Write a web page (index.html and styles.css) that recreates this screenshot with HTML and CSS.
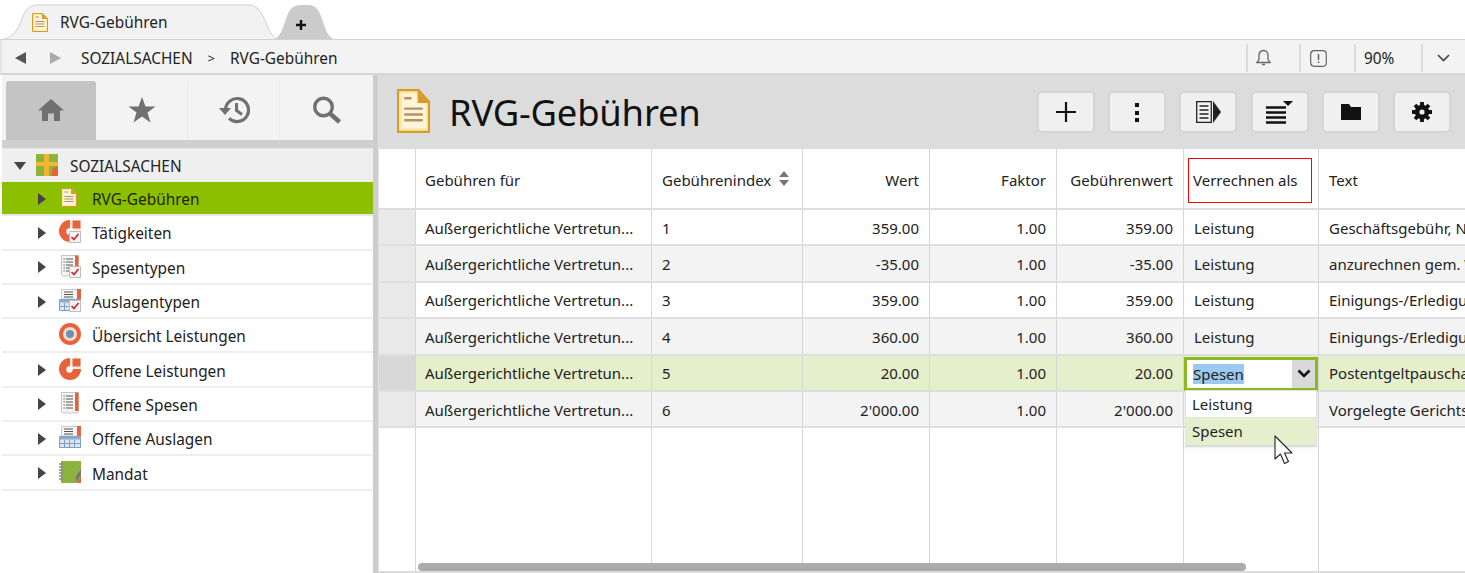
FILE: index.html
```html
<!DOCTYPE html>
<html lang="de">
<head>
<meta charset="utf-8">
<title>RVG-Gebühren</title>
<link rel="stylesheet" href="styles.css">
</head>
<body>
<svg class="defs" width="0" height="0">
  <defs>
    <symbol id="doc" viewBox="0 0 16 19">
      <path d="M.5.5H10.500L15.500 5.500V18.500H.5Z" fill="#fbe9a8" stroke="#d99a2b"/>
      <path d="M2.500 2H10L14 6V17H2.500Z" fill="#fdf6dc"/>
      <path d="M10 .5 15.500 6H10Z" fill="#d99a2b"/>
      <path d="M3.500 4H7M3.500 8.500H12.500M3.500 11H12.500M3.500 13.500H12.500" stroke="#b88f5f" fill="none"/>
    </symbol>
    <symbol id="pie" viewBox="0 0 22 22">
      <circle cx="11" cy="11" r="11" fill="#e8633a"/>
      <path d="M11 11V0H22V11Z" fill="#fbeee8"/>
      <path d="M13.500 8.500V.5H21.500V8.500Z" fill="#e8633a"/>
      <circle cx="10.500" cy="11.500" r="3.200" fill="#fff"/>
    </symbol>
    <symbol id="list" viewBox="0 0 18 22">
      <path d="M.5.5H17.500V20L15 21.500 12 20 9 21.500 6 20 3 21.500.5 20Z" fill="#f5f5f5" stroke="#c6c6c6"/>
      <path d="M14 .5H17.500V19H14Z" fill="#e8633a"/>
      <path d="M5 4H12M5 7H12M5 10H12M5 13H12M5 16H12M2.500 4H3.800M2.500 7H3.800M2.500 10H3.800M2.500 13H3.800M2.500 16H3.800" stroke="#555" fill="none"/>
    </symbol>
    <symbol id="cal" viewBox="0 0 22 22">
      <path d="M2.500.5H21V10H2.500Z" fill="#f5f5f5" stroke="#ccc"/>
      <path d="M18 0H22V10H18Z" fill="#e8633a"/>
      <path d="M5 3H14M5 5.500H14M5 8H14" stroke="#555" fill="none"/>
      <path d="M.5 10.500H21.500V21.500H.5Z" fill="#dbe6f1" stroke="#7f9fc0"/>
      <path d="M.5 10.500H21.500V13.500H.5Z" fill="#8aaacb"/>
      <path d="M5.500 14V21M10.500 14V21M15.500 14V21M1 17.500H21" stroke="#7f9fc0" fill="none"/>
    </symbol>
    <symbol id="check" viewBox="0 0 12 12">
      <path d="M.5.5H11.500V11.500H.5Z" fill="#f4f4f4" stroke="#bdbdbd"/>
      <path d="M2.500 6 5 8.500 9.500 3" stroke="#d5252b" stroke-width="1.700" fill="none"/>
    </symbol>
    <symbol id="tri" viewBox="0 0 8 12"><path d="M0 0 8 6 0 12Z" fill="#444"/></symbol>
  </defs>
</svg>

<header class="tabstrip">
  <div class="tab">
    <svg class="tab-shape" width="276" height="40" viewBox="0 0 276 40"><path d="M2 40C12 38 16 30 20 20 23 12 26 6 36 6H246C256 6 260 14 264 24 267 31 270 37 274 40" fill="#f2f2f2" stroke="#cfcfcf"/></svg>
    <svg class="tab-icon" width="16" height="19"><use href="#doc"/></svg>
    <span class="tab-label">RVG-Gebühren</span>
  </div>
  <div class="tab-new">
    <svg class="tab-shape" width="58" height="36" viewBox="0 0 58 36"><path d="M0 36C5 33 7 28 10 19 13 9 16 2 26 2H33C42 2 45 9 48 19 51 28 53 33 58 36Z" fill="#cbcbcb"/></svg>
    <svg class="tab-plus" width="10" height="10" viewBox="0 0 10 10"><path d="M5 0V10M0 5H10" stroke="#111" stroke-width="2.400"/></svg>
  </div>
</header>

<nav class="crumbbar">
  <svg class="nav-arrow" width="11" height="12" viewBox="0 0 11 12"><path d="M11 0V12L0 6Z" fill="#555"/></svg>
  <svg class="nav-arrow next" width="11" height="12" viewBox="0 0 11 12"><path d="M0 0V12L11 6Z" fill="#aaa"/></svg>
  <span class="crumb">SOZIALSACHEN</span>
  <span class="crumb-sep">&gt;</span>
  <span class="crumb">RVG-Gebühren</span>
  <div class="status">
    <div class="status-cell bell"><svg width="15" height="18" viewBox="0 0 15 18"><path d="M7.500 1.500C4 1.500 3 4 3 7V10.500L1 13.500H14L12 10.500V7C12 4 11 1.500 7.500 1.500ZM6 15.500H9" fill="none" stroke="#666" stroke-width="1.300"/></svg></div>
    <div class="status-cell alert"><svg width="17" height="17" viewBox="0 0 17 17"><rect x=".7" y=".7" width="15.600" height="15.600" rx="3.500" fill="none" stroke="#666" stroke-width="1.200"/><path d="M8.500 4V10M8.500 11.500V13" stroke="#666" stroke-width="1.500"/></svg></div>
    <div class="status-cell zoom">90%</div>
    <div class="status-cell more"><svg width="13" height="8" viewBox="0 0 13 8"><path d="M1 1 6.500 6.500 12 1" fill="none" stroke="#444" stroke-width="1.600"/></svg></div>
  </div>
</nav>

<main class="main">
  <aside class="sidebar">
    <div class="side-tabs">
      <div class="side-tab active"><svg width="28" height="24" viewBox="0 0 28 24"><path d="M14 1 1 12.500H5V23H11V15.500H17V23H23V12.500H27Z" fill="#707070"/></svg></div>
      <div class="side-tab"><svg width="28" height="26" viewBox="0 0 28 26"><path d="M14 0 17.500 9.500H27.500L19.500 15.500 22.500 25.500 14 19.500 5.500 25.500 8.500 15.500.5 9.500H10.500Z" fill="#707070"/></svg></div>
      <div class="side-tab"><svg width="32" height="28" viewBox="0 0 32 28"><path d="M7.500 14A11.500 11.500 0 1 1 11 22.300" fill="none" stroke="#707070" stroke-width="3.200"/><path d="M1 12H13L7 19Z" fill="#707070"/><path d="M18.500 7V14.500L24 18.500" fill="none" stroke="#707070" stroke-width="3"/></svg></div>
      <div class="side-tab"><svg width="30" height="28" viewBox="0 0 30 28"><circle cx="11.500" cy="11" r="8.800" fill="none" stroke="#707070" stroke-width="3.400"/><path d="M18 17.500 27.500 26" stroke="#707070" stroke-width="4.500"/></svg></div>
    </div>
    <div class="side-band"></div>
    <ul class="tree">
      <li class="tree-root">
        <svg class="caret-down" width="12" height="8" viewBox="0 0 12 8"><path d="M0 0H12L6 8Z" fill="#444"/></svg>
        <svg class="root-icon" width="22" height="22" viewBox="0 0 22 22"><rect width="22" height="22" fill="#8cb43c"/><path d="M8 0H13V8H22V12H13V22H8V12H0V8H8Z" fill="#f2b632"/><path d="M16 22V15L22 12V22Z" fill="#e8633a"/></svg>
        <span>SOZIALSACHEN</span>
      </li>
      <li class="tree-item selected"><svg class="tri" width="8" height="12"><use href="#tri"/></svg><svg class="item-icon doc-icon" width="16" height="19" viewBox="0 0 16 19"><use href="#doc"/></svg><span>RVG-Gebühren</span></li>
      <li class="tree-item"><svg class="tri" width="8" height="12"><use href="#tri"/></svg><span class="icon-box"><svg width="22" height="22"><use href="#pie"/></svg><svg class="badge" width="12" height="12"><use href="#check"/></svg></span><span>Tätigkeiten</span></li>
      <li class="tree-item"><svg class="tri" width="8" height="12"><use href="#tri"/></svg><span class="icon-box"><svg width="18" height="22" class="indent"><use href="#list"/></svg><svg class="badge" width="12" height="12"><use href="#check"/></svg></span><span>Spesentypen</span></li>
      <li class="tree-item"><svg class="tri" width="8" height="12"><use href="#tri"/></svg><span class="icon-box"><svg width="22" height="22"><use href="#cal"/></svg><svg class="badge" width="12" height="12"><use href="#check"/></svg></span><span>Auslagentypen</span></li>
      <li class="tree-item"><span class="tri-space"></span><svg class="item-icon" width="22" height="22" viewBox="0 0 22 22"><circle cx="11" cy="11" r="11" fill="#e8633a"/><circle cx="11" cy="11" r="7" fill="#f6ddd2"/><circle cx="11" cy="11" r="4" fill="#6f90b5"/></svg><span>Übersicht Leistungen</span></li>
      <li class="tree-item"><svg class="tri" width="8" height="12"><use href="#tri"/></svg><svg class="item-icon" width="22" height="22"><use href="#pie"/></svg><span>Offene Leistungen</span></li>
      <li class="tree-item"><svg class="tri" width="8" height="12"><use href="#tri"/></svg><span class="icon-box"><svg width="18" height="22" class="indent"><use href="#list"/></svg></span><span>Offene Spesen</span></li>
      <li class="tree-item"><svg class="tri" width="8" height="12"><use href="#tri"/></svg><svg class="item-icon" width="22" height="22"><use href="#cal"/></svg><span>Offene Auslagen</span></li>
      <li class="tree-item"><svg class="tri" width="8" height="12"><use href="#tri"/></svg><svg class="item-icon" width="22" height="22" viewBox="0 0 22 22"><rect x="2" width="20" height="22" fill="#8cb43c"/><path d="M22 8V14L17 21V15Z" fill="#777"/><path d="M18 22 22 15V22Z" fill="#e8633a"/><path d="M0 3H4M0 6H4M0 9H4M0 12H4M0 15H4M0 18H4" stroke="#888" stroke-width="1.500"/></svg><span>Mandat</span></li>
    </ul>
  </aside>

  <div class="splitter"></div>

  <section class="content">
    <div class="toolbar">
      <svg class="title-icon" width="33" height="44" viewBox="0 0 16 19" preserveAspectRatio="none"><use href="#doc"/></svg>
      <h1 class="title">RVG-Gebühren</h1>
      <div class="tools">
        <button class="tool"><svg width="20" height="20" viewBox="0 0 20 20"><path d="M10 0V20M0 10H20" stroke="#111" stroke-width="2.200"/></svg></button>
        <button class="tool"><svg width="4" height="20" viewBox="0 0 4 20"><path d="M0 1H4V5H0ZM0 9H4V13H0ZM0 16H4V20H0Z" fill="#111"/></svg></button>
        <button class="tool"><svg width="25" height="22" viewBox="0 0 25 22"><path d="M.7.7H15.300V21.300H.7Z" fill="#f2f2f2" stroke="#222" stroke-width="1.300"/><path d="M3.500 5H12.500M3.500 9H12.500M3.500 13H12.500M3.500 17H12.500" stroke="#222" stroke-width="1.300"/><path d="M17 0 25 11 17 22Z" fill="#222"/></svg></button>
        <button class="tool"><svg width="27" height="23" viewBox="0 0 27 23"><path d="M0 5H20M0 10H20M0 15H20M0 20H20" stroke="#111" stroke-width="2.400" transform="translate(0 1.500)"/><path d="M17 0H27L22 5Z" fill="#111"/></svg></button>
        <button class="tool"><svg width="20" height="16" viewBox="0 0 20 16"><path d="M0 0H8L10 3H20V16H0Z" fill="#111"/></svg></button>
        <button class="tool"><svg width="20" height="20" viewBox="0 0 20 20"><circle cx="10" cy="10" r="5" fill="none" stroke="#111" stroke-width="4.500"/><path d="M10 0V20M0 10H20M3 3 17 17M17 3 3 17" stroke="#111" stroke-width="3.800"/><circle cx="10" cy="10" r="2.600" fill="#eee"/></svg></button>
      </div>
    </div>

    <div class="grid">
      <div class="row head">
        <div class="cell gutter"></div>
        <div class="cell">Gebühren für</div>
        <div class="cell">Gebührenindex<svg class="sort" width="10" height="15" viewBox="0 0 10 15"><path d="M0 6 5 0 10 6ZM0 9H10L5 15Z" fill="#777"/></svg></div>
        <div class="cell num">Wert</div>
        <div class="cell num">Faktor</div>
        <div class="cell num">Gebührenwert</div>
        <div class="cell boxed"><span class="red-box">Verrechnen als</span></div>
        <div class="cell">Text</div>
      </div>
      <div class="row">
        <div class="cell gutter"></div><div class="cell">Außergerichtliche Vertretun...</div><div class="cell">1</div><div class="cell num">359.00</div><div class="cell num">1.00</div><div class="cell num">359.00</div><div class="cell">Leistung</div><div class="cell clip">Geschäftsgebühr, Nr. 2300 VV RVG</div>
      </div>
      <div class="row alt">
        <div class="cell gutter"></div><div class="cell">Außergerichtliche Vertretun...</div><div class="cell">2</div><div class="cell num">-35.00</div><div class="cell num">1.00</div><div class="cell num">-35.00</div><div class="cell">Leistung</div><div class="cell clip">anzurechnen gem. Vorbemerkung</div>
      </div>
      <div class="row">
        <div class="cell gutter"></div><div class="cell">Außergerichtliche Vertretun...</div><div class="cell">3</div><div class="cell num">359.00</div><div class="cell num">1.00</div><div class="cell num">359.00</div><div class="cell">Leistung</div><div class="cell clip">Einigungs-/Erledigungsgebühr</div>
      </div>
      <div class="row alt">
        <div class="cell gutter"></div><div class="cell">Außergerichtliche Vertretun...</div><div class="cell">4</div><div class="cell num">360.00</div><div class="cell num">1.00</div><div class="cell num">360.00</div><div class="cell">Leistung</div><div class="cell clip">Einigungs-/Erledigungsgebühr</div>
      </div>
      <div class="row current">
        <div class="cell gutter"></div><div class="cell">Außergerichtliche Vertretun...</div><div class="cell">5</div><div class="cell num">20.00</div><div class="cell num">1.00</div><div class="cell num">20.00</div>
        <div class="cell editor">
          <div class="combo"><span class="combo-value"><span class="sel">Spesen</span></span><span class="combo-btn"><svg width="14" height="9" viewBox="0 0 14 9"><path d="M1.500 1.500 7 7 12.500 1.500" fill="none" stroke="#111" stroke-width="2.600"/></svg></span></div>
          <div class="dropdown"><div class="opt">Leistung</div><div class="opt on">Spesen</div></div>
        </div>
        <div class="cell clip">Postentgeltpauschale</div>
      </div>
      <div class="row alt">
        <div class="cell gutter"></div><div class="cell">Außergerichtliche Vertretun...</div><div class="cell">6</div><div class="cell num">2'000.00</div><div class="cell num">1.00</div><div class="cell num">2'000.00</div><div class="cell"></div><div class="cell clip">Vorgelegte Gerichtskosten</div>
      </div>
      <div class="row filler">
        <div class="cell gutter"></div><div class="cell"></div><div class="cell"></div><div class="cell"></div><div class="cell"></div><div class="cell"></div><div class="cell"></div><div class="cell"></div>
      </div>
      <div class="hscroll"></div>
    </div>
    <svg class="cursor" width="20" height="30" viewBox="0 0 20 30"><path d="M1 1V24L6.500 19 10.500 28.500 14.500 26.500 10.500 18H18Z" fill="#fff" stroke="#222" stroke-width="1.100" stroke-linejoin="round"/></svg>
  </section>
</main>
</body>
</html>
```
FILE: styles.css
```css
* { box-sizing: border-box; }
html, body { margin: 0; padding: 0; }
body {
  width: 1465px; height: 573px; overflow: hidden; background: #fff;
  font-family: "Noto Sans", "Open Sans", sans-serif; font-size: 15px; color: #222;
  display: flex; flex-direction: column;
}
.defs { position: absolute; }

/* tab strip */
.tabstrip { height: 40px; display: flex; align-items: flex-end; padding-left: 2px; flex: none; border-bottom: 1px solid #d2d2d2; }
.tab { position: relative; width: 272px; height: 40px; display: flex; align-items: center; padding: 7px 0 0 30px; }
.tab-shape { position: absolute; left: 0; top: 0; }
.tab-icon { position: relative; margin-right: 12px; margin-top: -1px; }
.tab-label { position: relative; font-size: 15.400px; }
.tab-new { position: relative; width: 58px; height: 36px; margin-left: 1px; display: flex; align-items: center; justify-content: center; padding: 7px 6px 0 0; }
.tab-plus { position: relative; }

/* breadcrumb */
.crumbbar { height: 35px; flex: none; background: #f3f3f3; border-bottom: 2px solid #d6d6d6; border-left: 2px solid #e4e4e4; display: flex; align-items: center; padding: 3px 0 0 13px; }
.nav-arrow { margin-right: 25px; }
.nav-arrow.next { margin-right: 20px; margin-left: -1px; }
.crumb { font-size: 15.400px; white-space: nowrap; }
.crumb-sep { margin: 0 15px; font-size: 13px; }
.status { margin-left: auto; display: flex; height: 28px; align-self: center; }
.status-cell { border-left: 2px solid #dcdcdc; display: flex; align-items: center; justify-content: center; }
.bell { width: 53px; padding-right: 20px; }
.alert { width: 55px; padding-right: 18px; }
.zoom { width: 67px; justify-content: flex-start; padding-left: 8px; font-size: 15.400px; }
.more { width: 44px; padding-left: 8px; padding-right: 10px; }

/* layout */
.main { flex: 1; min-height: 0; display: flex; position: relative; }
.sidebar { width: 373px; flex: none; padding-left: 2px; display: flex; flex-direction: column; }
.splitter { width: 6px; flex: none; background: #cdcdcd; border-right: 1px solid #e2e2e2; }
.side-tabs { height: 65px; background: #f3f3f3; display: grid; grid-template-columns: 90px 92px 92px 1fr; padding: 6px 0 0 4px; flex: none; }
.side-tab { background: #f3f3f3; border-right: 1px solid #ececec; display: flex; align-items: center; justify-content: center; padding-bottom: 2px; }
.side-tab:last-child { border-right: 0; }
.side-tab.active { background: #c4c4c4; border: 0; border-radius: 3px 3px 0 0; }
.side-band { height: 8px; background: #cfcfcf; flex: none; }

.tree { list-style: none; margin: 0; padding: 0; }
.tree-root { height: 34px; background: #efefef; display: flex; align-items: center; padding: 1px 0 0 12px; font-size: 15.400px; border-top: 1px solid #e4e4e4; }
.caret-down { margin-right: 10px; }
.root-icon { margin-right: 12px; margin-top: -3px; }
.tree-item { height: 34.300px; display: flex; align-items: center; padding: 3px 0 0 36px; border-bottom: 2px solid #eee; font-size: 15.400px; }
.tree-item.selected { background: #8cbf00; border-bottom-color: #e9e9e9; color: #1c2500; }
.tri { margin-right: 13px; flex: none; margin-top: -2px; }
.tri-space { width: 21px; flex: none; }
.item-icon { margin-right: 11px; flex: none; margin-top: -5px; }
.item-icon.doc-icon { margin-left: 2px; margin-right: 15px; }
.icon-box { position: relative; width: 22px; height: 22px; margin-right: 11px; flex: none; margin-top: -5px; }
.icon-box .indent { margin-left: 2px; }
.badge { position: absolute; right: 0; bottom: -1px; }

/* toolbar */
.content { flex: 1; min-width: 0; display: flex; flex-direction: column; position: relative; }
.toolbar { height: 74px; flex: none; background: #dcdcdc; display: flex; align-items: center; padding-left: 18px; }
.title-icon { margin-right: 19px; margin-top: -2px; }
.title { margin: 0; font-size: 36.400px; font-weight: 400; color: #111; letter-spacing: -.2px; }
.tools { margin-left: auto; display: flex; gap: 13.200px; padding-right: 14px; }
.tool { width: 58px; height: 42px; background: #f0f0f0; border: 2px solid #d5d5d5; border-radius: 5px; display: flex; align-items: center; justify-content: center; padding: 0; }

/* grid */
.grid { flex: 1; min-height: 0; display: flex; flex-direction: column; position: relative; border-bottom: 2px solid #dcdcdc; }
.row { display: grid; grid-template-columns: 37px 236px 151px 127px 127px 127px 135px 1fr; height: 36.400px; flex: none; border-bottom: 2px solid #dedede; }
.row.head { height: 61px; }
.row.alt { background: #f3f3f3; }
.row.current { background: #e6efcc; }
.row.filler { flex: 1; height: auto; border-bottom: 0; }
.cell { display: flex; align-items: center; padding: 1px 10px 0; border-right: 1px solid #d6d6d6; white-space: nowrap; overflow: hidden; min-width: 0; position: relative; }
.cell:nth-child(2) { padding-left: 9px; }
.cell:last-child { border-right: 0; }
.row .cell { font-size: 15px; }
.head .cell { padding-top: 3px; }
.num { justify-content: flex-end; }
.gutter { background: #e9e9e9; padding: 0; }
.head .gutter, .filler .gutter { background: #fff; }
.current .gutter { background: #d8d8d8; }
.sort { margin-left: 8px; margin-top: -3px; flex: none; }
.head .boxed { padding: 0 0 0 4px; }
.red-box { border: 1px solid #f00; width: 124px; height: 45px; display: flex; align-items: center; padding-left: 4px; white-space: nowrap; margin-top: 3px; }
.editor { overflow: visible; padding: 0; z-index: 3; }
.combo { position: absolute; left: 0; top: 1px; width: 134px; height: 34px; border: 3px solid #8cb820; background: #fff; display: flex; }
.combo-value { flex: 1; display: flex; align-items: center; padding-left: 6px; }
.sel { background: #9cc9ef; }
.combo-btn { width: 23px; background: #d9d9d9; display: flex; align-items: center; justify-content: center; }
.dropdown { position: absolute; left: 1px; top: 34px; width: 132px; background: #fff; border: 1px solid #e2e2e2; border-bottom: 2px solid #ddd; box-shadow: 0 1px 2px rgba(0,0,0,.08); }
.opt { height: 26px; display: flex; align-items: center; padding-left: 6px; }
.opt.on { background: #e6efcc; border-top: 1px solid #e2e2e2; height: 28px; }
.hscroll { position: absolute; left: 39px; bottom: 0; width: 828px; height: 8px; border-radius: 4px; background: #ababab; }
.cursor { position: absolute; left: 895px; top: 360px; z-index: 5; }
```
